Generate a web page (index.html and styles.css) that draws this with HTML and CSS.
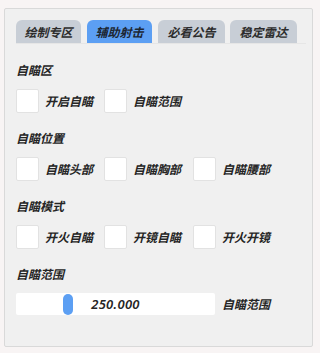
FILE: index.html
```html
<!DOCTYPE html>
<html lang="zh">
<head>
<meta charset="utf-8">
<link rel="stylesheet" href="styles.css">
</head>
<body>
<div class="panel">
  <div class="tabs">
    <div class="tab w65">绘制专区</div>
    <div class="tab w65 active">辅助射击</div>
    <div class="tab w67">必看公告</div>
    <div class="tab w67">稳定雷达</div>
  </div>
  <div class="content">
    <div class="section">
      <div class="label">自瞄区</div>
      <div class="row">
        <div class="item"><span class="box"></span><span class="txt">开启自瞄</span></div>
        <div class="item"><span class="box"></span><span class="txt">自瞄范围</span></div>
      </div>
    </div>
    <div class="section">
      <div class="label">自瞄位置</div>
      <div class="row">
        <div class="item"><span class="box"></span><span class="txt">自瞄头部</span></div>
        <div class="item"><span class="box"></span><span class="txt">自瞄胸部</span></div>
        <div class="item"><span class="box"></span><span class="txt">自瞄腰部</span></div>
      </div>
    </div>
    <div class="section">
      <div class="label">自瞄模式</div>
      <div class="row">
        <div class="item"><span class="box"></span><span class="txt">开火自瞄</span></div>
        <div class="item"><span class="box"></span><span class="txt">开镜自瞄</span></div>
        <div class="item"><span class="box"></span><span class="txt">开火开镜</span></div>
      </div>
    </div>
    <div class="section">
      <div class="label">自瞄范围</div>
      <div class="slider-row">
        <div class="slider">
          <span class="handle"></span>
          <span class="value">250.000</span>
        </div>
        <span class="txt">自瞄范围</span>
      </div>
    </div>
  </div>
</div>
</body>
</html>
```

FILE: styles.css
```css
html, body {
  margin: 0;
  padding: 0;
}
body {
  background: #f8f4f4;
  width: 318px;
  height: 353px;
  overflow: hidden;
  font-family: "Noto Sans CJK SC", "Noto Sans", sans-serif;
  font-style: italic;
  font-weight: 700;
  font-size: 12px;
  color: #252525;
}
.panel {
  margin: 8px 0 0 4px;
  width: 307px;
  height: 337px;
  border: 1px solid #d9d9d9;
  border-radius: 2px;
  background: #f0f0f0;
  box-sizing: content-box;
}
.tabs {
  display: flex;
  margin: 11px 6px 0 11px;
  border-bottom: 1px solid #e6e6e6;
  height: 23px;
}
.tab {
  height: 23px;
  margin-right: 6px;
  background: #c8ced6;
  border-radius: 6px 6px 0 0;
  display: flex;
  align-items: center;
  justify-content: center;
  line-height: 1;
  color: #2c2c2c;
}
.w65 { width: 65px; }
.w67 { width: 67px; margin-right: 5px; }
.tab.active {
  background: #5c9ff3;
  color: #1d2733;
}
.content {
  padding: 18px 0 0 11px;
}
.section {
  margin-bottom: 17px;
}
.label {
  height: 16px;
  line-height: 16px;
  margin-bottom: 11px;
}
.row {
  display: flex;
}
.item {
  width: 88px;
  display: flex;
  align-items: center;
}
.item:nth-child(2) {
  width: 89px;
}
.box {
  width: 23px;
  height: 24px;
  background: #ffffff;
  border: 1px solid #e2e2e2;
  border-radius: 2px;
  box-sizing: border-box;
  flex: none;
}
.txt {
  margin-left: 6px;
  line-height: 16px;
}
.slider-row {
  display: flex;
  align-items: center;
}
.slider {
  position: relative;
  width: 199px;
  height: 22px;
  background: #ffffff;
  border-radius: 2px;
  display: flex;
  align-items: center;
  justify-content: center;
}
.handle {
  position: absolute;
  left: 47px;
  top: 1px;
  width: 10px;
  height: 21px;
  border-radius: 5px;
  background: #5c9ff3;
}
.value {
  font-family: "Noto Sans", "Liberation Sans", sans-serif;
  font-weight: 600;
  font-size: 13px;
  letter-spacing: 0.3px;
}
.slider-row .txt {
  margin-left: 7px;
}
```
